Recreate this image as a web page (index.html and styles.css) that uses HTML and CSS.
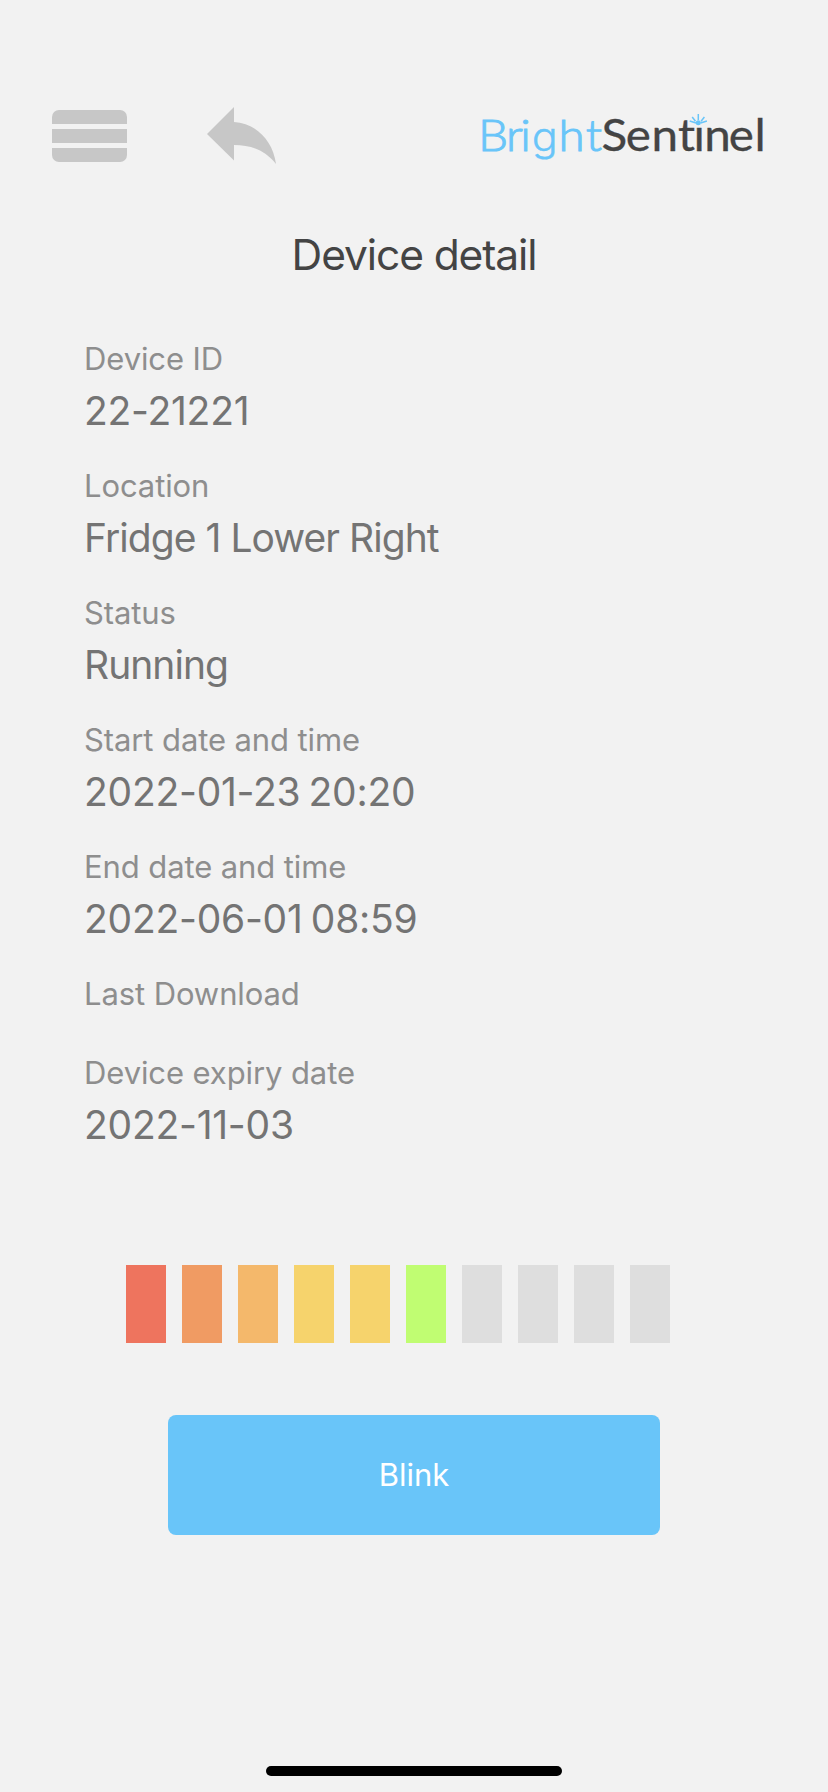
FILE: index.html
```html
<!DOCTYPE html>
<html lang="en">
<head>
  <meta charset="UTF-8">
  <meta name="viewport" content="width=device-width, initial-scale=1.0">
  <title>Device detail</title>
  <link rel="stylesheet" href="styles.css">
</head>
<body>
  <!-- Top bar -->
  <header class="topbar">
    <button type="button" class="icon-button menu-button" aria-label="Menu">
      <svg width="75" height="52" viewBox="0 0 75 52">
        <path d="M0 14V7a7 7 0 0 1 7-7h61a7 7 0 0 1 7 7v7z"/>
        <path d="M0 19h75v14H0z"/>
        <path d="M0 38h75v7a7 7 0 0 1-7 7H7a7 7 0 0 1-7-7z"/>
      </svg>
    </button>
    <button type="button" class="icon-button back-button" aria-label="Back">
      <svg width="70" height="58" viewBox="0 0 70 58">
        <path d="M0 27L27 0V15C48 16 66 33 69 57C58 43 44 38 27 38V53.500z"/>
      </svg>
    </button>
    <svg class="logo" width="290" height="60" viewBox="0 0 290 60" role="img" aria-label="BrightSentinel">
      <g transform="scale(1.08 1)">
        <text class="logo-bright" x="0 25.900 39.100 49.800 74.600 99.800" y="46">Bri<tspan class="logo-g">g</tspan>ht</text>
        <text class="logo-sentinel" x="114.300 136.900 160.600 185.200 199.600 209.400 232.200 256" y="46">Sentinel</text>
      </g>
      <!-- Spark in place of the dot on the i -->
      <rect class="logo-gap" x="214" y="9" width="13" height="13"/>
      <circle class="spark-dot" cx="220.300" cy="17.800" r="2.500"/>
      <path class="spark-rays" d="M220.300 15V9M217.500 16.300l-3.300-4.300M223.100 16.300l3.300-4.300M218 18l-6.300-2M222.600 18l6.300-2"/>
    </svg>
  </header>

  <main>
    <h1>Device detail</h1>

    <!-- Device information -->
    <div class="details">
      <div class="detail">
        <p class="label">Device ID</p>
        <p class="value value-number">22-21221</p>
      </div>
      <div class="detail">
        <p class="label">Location</p>
        <p class="value">Fridge 1 Lower Right</p>
      </div>
      <div class="detail">
        <p class="label">Status</p>
        <p class="value">Running</p>
      </div>
      <div class="detail">
        <p class="label">Start date and time</p>
        <p class="value value-number">2022-01-23 20:20</p>
      </div>
      <div class="detail">
        <p class="label">End date and time</p>
        <p class="value value-number">2022-06-01 08:59</p>
      </div>
      <div class="detail">
        <p class="label">Last Download</p>
        <p class="value"></p>
      </div>
      <div class="detail">
        <p class="label">Device expiry date</p>
        <p class="value value-number">2022-11-03</p>
      </div>
    </div>

    <!-- Level -->
    <div class="level">
      <span class="bar red"></span>
      <span class="bar orange"></span>
      <span class="bar amber"></span>
      <span class="bar yellow"></span>
      <span class="bar yellow"></span>
      <span class="bar green"></span>
      <span class="bar"></span>
      <span class="bar"></span>
      <span class="bar"></span>
      <span class="bar"></span>
    </div>

    <button type="button" class="blink-button">Blink</button>
  </main>

  <div class="home-indicator"></div>
</body>
</html>
```
FILE: styles.css
```css
* {
  box-sizing: border-box;
}

body {
  margin: 0;
  height: 1792px;
  display: flex;
  flex-direction: column;
  background: #f2f2f2;
  font-family: Inter, 'Liberation Sans', sans-serif;
  overflow: hidden;
}

h1, p {
  margin: 0;
  font-weight: 400;
  white-space: nowrap;
}

/* Top bar */
.topbar {
  display: flex;
  align-items: flex-start;
  height: 227px;
  padding: 105px 0 0 52px;
}

.icon-button {
  padding: 0;
  border: none;
  background: none;
  fill: #c7c7c7;
  cursor: pointer;
}

.icon-button svg {
  display: block;
}

.menu-button {
  margin-top: 5px;
}

.back-button {
  margin: 2px 0 0 80px;
}

.logo {
  margin-left: 201px;
  font-family: Lato, sans-serif;
  font-size: 44px;
  overflow: visible;
}

.logo-bright {
  font-weight: 300;
  fill: #69c5f9;
  stroke: #69c5f9;
  stroke-width: 1;
}

.logo-g {
  font-family: Inter, sans-serif;
  font-size: 40px;
  stroke-width: 0.3;
}

.logo-sentinel {
  font-weight: 400;
  fill: #444;
  stroke: #444;
  stroke-width: 0.3;
}

.logo-gap {
  fill: #f2f2f2;
}

.spark-dot {
  fill: #69c5f9;
}

.spark-rays {
  fill: none;
  stroke: #69c5f9;
  stroke-width: 1.5;
}

h1 {
  height: 56px;
  line-height: 56px;
  font-size: 42.5px;
  letter-spacing: -1.1px;
  text-align: center;
  color: #444;
}

/* Device information */
.details {
  display: flex;
  flex-direction: column;
  gap: 32px;
  margin-top: 57px;
  padding-left: 84px;
}

.detail {
  display: flex;
  flex-direction: column;
}

.label {
  height: 38px;
  line-height: 38px;
  font-size: 31px;
  letter-spacing: -0.1px;
  color: #8e8e8e;
}

.value {
  margin-top: 9px;
  line-height: 48px;
  font-size: 39px;
  letter-spacing: -0.95px;
  color: #747474;
}

.value-number {
  letter-spacing: -0.25px;
  word-spacing: -2.5px;
}

/* Level */
.level {
  display: flex;
  gap: 16px;
  margin: 116px 0 0 126px;
}

.bar {
  width: 40px;
  height: 78px;
  background: #dedede;
}

.red {
  background: #ee745e;
}

.orange {
  background: #f09b63;
}

.amber {
  background: #f4b86b;
}

.yellow {
  background: #f6d36c;
}

.green {
  background: #c0fd72;
}

.blink-button {
  display: block;
  width: 492px;
  height: 120px;
  margin: 72px auto 0;
  padding: 0 0 2px;
  border: none;
  border-radius: 8px;
  background: #69c5f9;
  color: #fff;
  font-family: inherit;
  font-size: 31px;
  cursor: pointer;
}

.home-indicator {
  width: 296px;
  height: 10px;
  margin: auto auto 16px;
  border-radius: 5px;
  background: #000;
}
```
